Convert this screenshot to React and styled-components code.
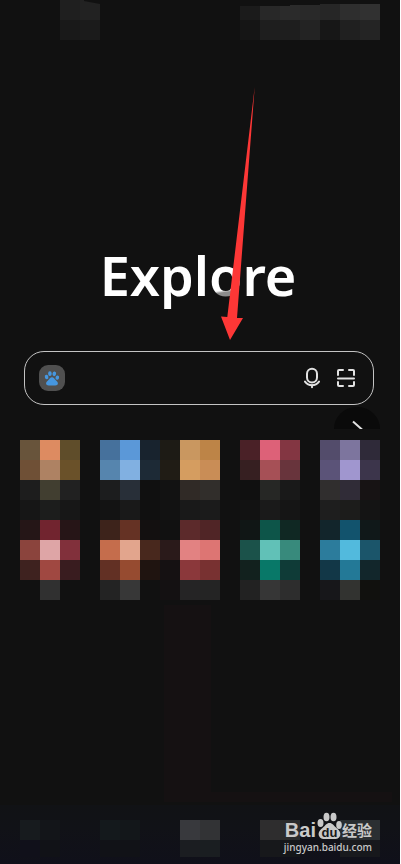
import React from 'react';
import styled, { createGlobalStyle } from 'styled-components';

const GlobalStyle = createGlobalStyle`
  * {
    box-sizing: border-box;
  }

  body {
    margin: 0;
    background: #111111;
    color: #ffffff;
    font-family: "Noto Sans", "Noto Sans CJK SC", sans-serif;
  }
`;

const statusLeft = [
  ['#1f1f1f', '#222222'],
  ['#191919', '#1b1b1b'],
];

const statusRight = [
  ['#1b1b1b', '#282828', '#2b2b2b', '#292929', '#262626', '#2e2e2e', '#313131'],
  ['#151515', '#1e1e1e', '#1e1e1e', '#232323', '#171717', '#202020', '#242424'],
];

const shortcuts = [
  {
    label: 'Shortcut 1',
    rows: [
      ['#68543b', '#dd8b61', '#5f4d2a'],
      ['#6f5036', '#ae8263', '#6a5129'],
      ['#1d1d1d', '#413e30', '#212121'],
      ['#161616', '#1c1d1c', '#171717'],
    ],
  },
  {
    label: 'Shortcut 2',
    rows: [
      ['#46719c', '#5b98d8', '#18232e', '#1d1b15'],
      ['#5685ae', '#81b0e1', '#1d2a36', '#201c15'],
      ['#1c1d1e', '#282f38', '#101010', '#121212'],
      ['#131313', '#191919', '#101010', '#121212'],
    ],
  },
  {
    label: 'Shortcut 3',
    rows: [
      ['#c99760', '#bd8447'],
      ['#d59d60', '#c98d56'],
      ['#302a26', '#312e2b'],
      ['#191919', '#1b1b1b'],
    ],
  },
  {
    label: 'Shortcut 4',
    rows: [
      ['#4a2127', '#dd6178', '#833642'],
      ['#361f21', '#a65056', '#68343c'],
      ['#101010', '#262725', '#191919'],
      ['#121212', '#1a1a1a', '#151515'],
    ],
  },
  {
    label: 'Shortcut 5',
    rows: [
      ['#534c6b', '#7d759e', '#2f2a39'],
      ['#5b5378', '#a096cf', '#3c354b'],
      ['#302e2e', '#302c37', '#171314'],
      ['#1e1e1e', '#1c1c1b', '#141414'],
    ],
  },
  {
    label: 'Shortcut 6',
    rows: [
      ['#251617', '#71242f', '#261517'],
      ['#8b443d', '#dea5a6', '#81303b'],
      ['#3e221f', '#a04841', '#391c1f'],
      ['#111111', '#303030', '#111111'],
    ],
  },
  {
    label: 'Shortcut 7',
    rows: [
      ['#3d231b', '#653224', '#131010', '#111111'],
      ['#c56d4c', '#e2a58d', '#48281d', '#2a1a1a'],
      ['#623024', '#964b30', '#1f1410', '#151112'],
      ['#232323', '#373737', '#111111', '#141112'],
    ],
  },
  {
    label: 'Shortcut 8',
    rows: [
      ['#5c2a2b', '#502526'],
      ['#e28282', '#dd7573'],
      ['#8b383b', '#783131'],
      ['#252425', '#242424'],
    ],
  },
  {
    label: 'Shortcut 9',
    rows: [
      ['#101615', '#0d5549', '#102823'],
      ['#1b524a', '#61c1b7', '#388a7c'],
      ['#12211e', '#087868', '#0f3b37'],
      ['#222222', '#363636', '#2d2d2d'],
    ],
  },
  {
    label: 'Shortcut 10',
    rows: [
      ['#12252b', '#12536d', '#101819'],
      ['#2c7c9c', '#52badd', '#1b556a'],
      ['#123747', '#237997', '#12262b'],
      ['#17171a', '#323330', '#11110e'],
    ],
  },
];

const tabs = [
  { label: 'Home', rows: [['#171b1e', '#131519'], ['#10101a', '#111217']] },
  { label: 'Videos', rows: [['#14191c', '#13171a'], ['#111217', '#111217']] },
  { label: 'Menu', rows: [['#38393d', '#323335'], ['#1b1d21', '#1a1e21']] },
  { label: 'Windows', rows: [['#2e2d2e', '#2b2c2d'], ['#17181b', '#15171a']] },
  { label: 'Profile', rows: [['#292d30', '#2b2f32'], ['#191a1e', '#17181c']] },
];

const Screen = styled.div`
  position: relative;
  display: flex;
  flex-direction: column;
  min-height: 100vh;
  overflow: hidden;
  border-right: 1px solid #ffffff;
`;

const StatusBar = styled.header`
  display: flex;
  justify-content: space-between;
  height: 40px;
  padding: 0 20px 0 60px;
`;

const StatusGroup = styled.div`
  clip-path: ${({ $shape }) => $shape};
`;

const MosaicRow = styled.div`
  display: flex;
`;

const Block = styled.span`
  flex: none;
  width: 20px;
  height: 20px;
  background: ${({ $color }) => $color};
`;

const Main = styled.main`
  display: flex;
  flex: 1;
  flex-direction: column;
`;

const Title = styled.h1`
  margin: 200px 0 0;
  padding-right: 4px;
  color: #ffffff;
  font-family: "Noto Sans", sans-serif;
  font-size: 54px;
  font-weight: 600;
  line-height: 70px;
  text-align: center;
`;

const ShadedLetter = styled.span`
  background: linear-gradient(172deg, #ffffff 69%, #8c8c8c 72%);
  background-clip: text;
  color: transparent;
`;

const SearchBar = styled.form`
  display: flex;
  align-items: center;
  height: 54px;
  margin: 41px 26px 0 24px;
  padding: 0 10px 0 14px;
  border: 1px solid #c4c4c4;
  border-radius: 20px;
`;

const IconButton = styled.button`
  display: flex;
  align-items: center;
  justify-content: center;
  width: ${({ $width }) => $width}px;
  height: 32px;
  padding: 0;
  border: 0;
  background: none;
  color: #e2e2e2;
`;

const EngineButton = styled(IconButton)`
  height: 26px;
  border-radius: 9px;
  background: #505050;
`;

const SearchInput = styled.input`
  flex: 1;
  min-width: 0;
  height: 40px;
  padding: 0 12px;
  border: 0;
  outline: 0;
  background: transparent;
  color: #ffffff;
  font: inherit;
  font-size: 16px;
`;

const ExpandRow = styled.div`
  display: flex;
  justify-content: flex-end;
  height: 35px;
  padding: 2px 20px 0 0;
`;

const ExpandButton = styled.button`
  width: 46px;
  height: 22px;
  padding: 0;
  border: 0;
  border-radius: 23px 23px 0 0;
  background: #0a0a0a;
  color: #e2e2e2;
`;

const ShortcutGrid = styled.nav`
  display: grid;
  grid-template-columns: 60px 60px 40px 60px 60px;
  justify-content: space-between;
  padding: 0 20px;
`;

const Shortcut = styled.a`
  display: block;
  height: 80px;
`;

const Wallpaper = styled.div`
  flex: 1;
  margin: 5px 8px 3px 41%;
  border: solid #151112;
  border-width: 0 0 10px 47px;
`;

const TabBar = styled.nav`
  display: flex;
  justify-content: space-between;
  height: 59px;
  padding: 15px 20px 0;
  background: linear-gradient(#111215, #111217 40%, #10101a);
`;

const Tab = styled.a`
  display: block;
  width: 40px;
  height: 37px;
  overflow: hidden;
`;

const Pointer = styled.svg`
  position: absolute;
  top: 86px;
  left: 50%;
  width: 60px;
  height: 256px;
  pointer-events: none;
`;

const Watermark = styled.div`
  position: absolute;
  right: 28px;
  bottom: 10px;
  display: flex;
  flex-direction: column;
  align-items: flex-end;
  color: #c9c9c9;
`;

const Brand = styled.div`
  display: flex;
  align-items: flex-end;
  font-family: "Liberation Sans", "Noto Sans CJK SC", sans-serif;
  font-size: 20px;
  font-weight: 700;
  line-height: 20px;
`;

const BrandSuffix = styled.span`
  font-family: "Noto Sans CJK SC", sans-serif;
  font-size: 15px;
  font-weight: 700;
`;

const Site = styled.span`
  font-size: 10px;
  font-weight: 500;
  line-height: 14px;
`;

const Mosaic = ({ rows }) =>
  rows.map((row, i) => (
    <MosaicRow key={i}>
      {row.map((color, j) => (
        <Block key={j} $color={color} />
      ))}
    </MosaicRow>
  ));

const Paw = () => (
  <svg width="16" height="16" viewBox="0 0 16 16" fill="#4697e0" aria-hidden="true">
    <ellipse cx="2.6" cy="7" rx="1.8" ry="2.3" transform="rotate(-12 2.6 7)" />
    <ellipse cx="5.9" cy="3.7" rx="1.8" ry="2.4" />
    <ellipse cx="10.3" cy="3.8" rx="1.8" ry="2.4" transform="rotate(8 10.3 3.8)" />
    <ellipse cx="13.3" cy="7.6" rx="1.8" ry="2.2" transform="rotate(12 13.3 7.6)" />
    <path d="M8 7.3c1.8 0 2.4 1.7 4 3.1 1.7 1.4 2.3 2.4 1.7 3.8-.7 1.5-3.3 1.2-5.7 1.2s-5 .3-5.7-1.2c-.6-1.4 0-2.4 1.7-3.8C5.6 9 6.2 7.3 8 7.3z" />
  </svg>
);

const Mic = () => (
  <svg width="16" height="22" viewBox="0 0 16 22" fill="none" stroke="currentColor" strokeWidth="2" aria-hidden="true">
    <rect x="3" y="1.8" width="10" height="13.6" rx="5" />
    <path d="M1 14.6c1.8 2.4 4.2 3.6 7 3.6s5.2-1.2 7-3.6M8 18v2.200" strokeLinecap="round" />
  </svg>
);

const Scan = () => (
  <svg width="20" height="20" viewBox="0 0 20 20" fill="none" stroke="currentColor" strokeWidth="2" strokeLinecap="round" aria-hidden="true">
    <path d="M2 7V3a1 1 0 0 1 1-1h4M13 2h4a1 1 0 0 1 1 1v4M2 14v3a1 1 0 0 0 1 1h4M13 18h4a1 1 0 0 0 1-1v-3M2 10.500h16" />
  </svg>
);

const App = () => (
  <>
    <GlobalStyle />
    <Screen>
      <StatusBar>
        <StatusGroup $shape="polygon(0 0, 24px 0, 24px 1px, 40px 4px, 40px 40px, 0 40px)">
          <Mosaic rows={statusLeft} />
        </StatusGroup>
        <StatusGroup $shape="polygon(0 6px, 50px 6px, 50px 5px, 80px 5px, 80px 4px, 140px 4px, 140px 40px, 0 40px)">
          <Mosaic rows={statusRight} />
        </StatusGroup>
      </StatusBar>

      <Main>
        <Title>
          Expl<ShadedLetter>o</ShadedLetter>re
        </Title>
        <SearchBar role="search" onSubmit={(e) => e.preventDefault()}>
          <EngineButton type="button" $width={26} aria-label="Search engine">
            <Paw />
          </EngineButton>
          <SearchInput type="text" aria-label="Search" />
          <IconButton type="button" $width={34} aria-label="Voice search">
            <Mic />
          </IconButton>
          <IconButton type="button" $width={34} aria-label="Scan">
            <Scan />
          </IconButton>
        </SearchBar>

        <ExpandRow>
          <ExpandButton type="button" aria-label="More shortcuts">
            <svg width="46" height="22" viewBox="0 0 46 22" fill="none" stroke="currentColor" strokeWidth="2">
              <path d="M19 14.500l9 8" />
            </svg>
          </ExpandButton>
        </ExpandRow>

        <ShortcutGrid aria-label="Shortcuts">
          {shortcuts.map(({ label, rows }) => (
            <Shortcut key={label} href="#" aria-label={label}>
              <Mosaic rows={rows} />
            </Shortcut>
          ))}
        </ShortcutGrid>
        <Wallpaper />
      </Main>

      <TabBar aria-label="Main">
        {tabs.map(({ label, rows }) => (
          <Tab key={label} href="#" aria-label={label}>
            <Mosaic rows={rows} />
          </Tab>
        ))}
      </TabBar>

      <Pointer viewBox="0 0 60 256" aria-hidden="true">
        <path d="M54.700 1L37 232h6L30 254 21 230.500l6.300.5z" fill="#fd3736" />
      </Pointer>

      <Watermark>
        <Brand>
          Bai
          <svg width="26" height="28" viewBox="0 0 26 28" fill="currentColor" aria-hidden="true">
            <ellipse cx="4.500" cy="11" rx="3" ry="4" />
            <ellipse cx="10.500" cy="5" rx="3" ry="4.300" />
            <ellipse cx="17.500" cy="5" rx="3" ry="4.300" />
            <ellipse cx="23" cy="13" rx="2.800" ry="4" />
            <path d="M13.500 11c3 0 4 2.500 7 5 3.500 3 4.500 5 3.500 8-1.500 4-6 3-10.500 3s-9 1-10.500-3c-1-3 0-5 3.500-8 3-2.500 4-5 7-5z" />
            <text x="13.500" y="25" textAnchor="middle" fontSize="13" fontWeight="700" fill="#17181b">du</text>
          </svg>
          <BrandSuffix>经验</BrandSuffix>
        </Brand>
        <Site>jingyan.baidu.com</Site>
      </Watermark>
    </Screen>
  </>
);

export default App;
